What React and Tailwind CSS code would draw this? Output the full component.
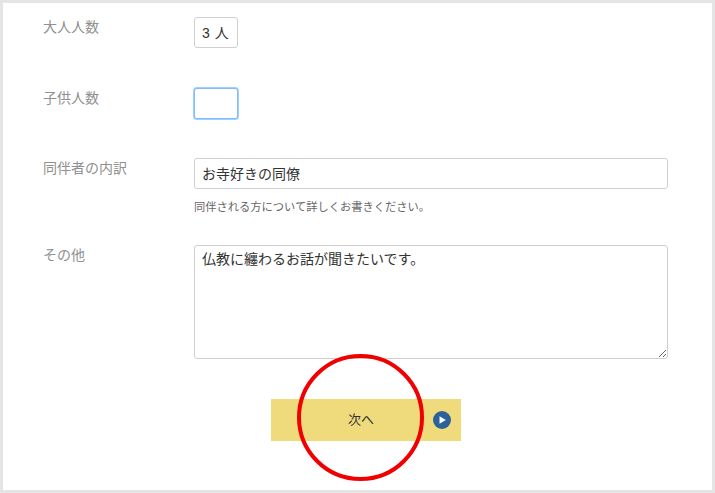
const font = { fontFamily: '"Liberation Sans", "Noto Sans CJK JP", sans-serif' };

function Row({ label, children, className }) {
  return (
    <div className={`flex ${className}`}>
      <div className="w-[191px] shrink-0 pl-[40px] text-[14px] leading-[20px] text-[#909090]">{label}</div>
      <div className="flex-1">{children}</div>
    </div>
  );
}

export default function App() {
  return (
    <div style={font} className="relative box-border h-[493px] w-[715px] overflow-hidden border-[3px] border-[#e5e5e5] bg-white text-[#333]">
      <div className="pt-[14px]">
        <Row label="大人人数" className="h-[71px]">
          <input readOnly value="3 人" className="box-border h-[31px] w-[44px] rounded-[3px] border border-[#cfcfcf] bg-white px-[7px] pb-[2px] text-[14px] tracking-[0.5px] text-[#333] outline-none" />
        </Row>
        <Row label="子供人数" className="h-[70px]">
          <input readOnly value="" className="box-border h-[31px] w-[44px] rounded-[3px] border border-[#80bdff] bg-white px-[7px] shadow-[0_0_0_1px_rgba(128,189,255,0.75)] outline-none" />
        </Row>
        <Row label="同伴者の内訳" className="h-[87px]">
          <input readOnly value="お寺好きの同僚" className="box-border h-[31px] w-[474px] rounded-[3px] border border-[#cfcfcf] bg-white px-[7px] pb-[2px] text-[14px] text-[#333] outline-none" />
          <p className="mt-[10px] text-[11.25px] leading-[16px] text-[#666]">同伴される方について詳しくお書きください。</p>
        </Row>
        <Row label="その他" className="h-[154px]">
          <textarea readOnly value="仏教に纏わるお話が聞きたいです。" className="box-border block h-[114px] w-[474px] resize-y rounded-[3px] border border-[#cfcfcf] bg-white px-[7px] py-[3px] text-[14px] leading-[20px] text-[#333] outline-none" />
        </Row>
        <div className="flex pl-[268px]">
          <div className="relative flex h-[42px] w-[190px] items-center justify-center bg-[#efdb7c] pr-[10px] text-[13px] text-[#333]">
            次へ
            <svg className="absolute right-[10px] top-[12px]" width="18" height="18" viewBox="0 0 18 18">
              <circle cx="9" cy="9" r="9" fill="#2b6299" />
              <path d="M6.5 5.2 L12.8 9 L6.5 12.8 Z" fill="#ffffff" />
            </svg>
          </div>
        </div>
      </div>
      <div className="pointer-events-none absolute left-[294px] top-[351px] h-[127px] w-[127px] rounded-full border-4 border-[#f00000]" />
    </div>
  );
}
